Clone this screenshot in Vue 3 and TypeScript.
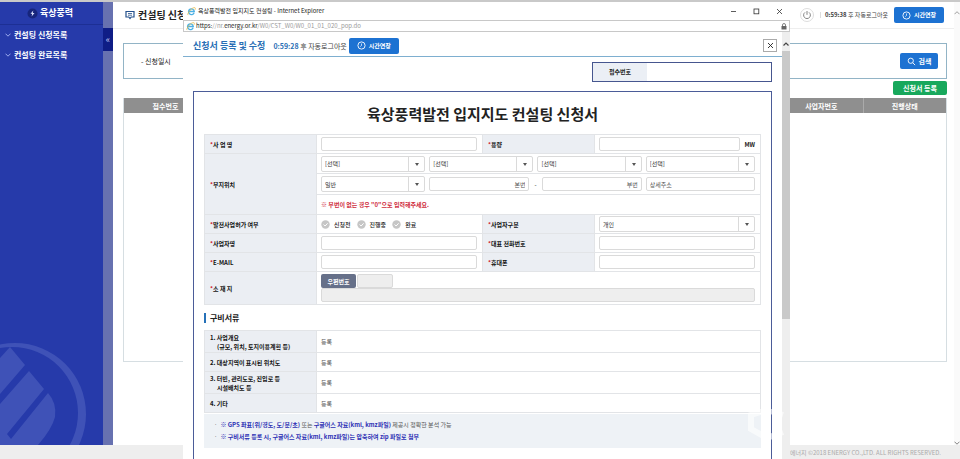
<script setup lang="ts">
import { ref } from 'vue'

interface Doc {
  lines: string[]
}

const menu: string[] = ['컨설팅 신청목록', '컨설팅 완료목록']
const regions: string[] = ['시/도', '시/군/구', '읍/면/동', '리']
const permits: string[] = ['신청전', '진행중', '완료']
const permit = ref<string>('')
const docs: Doc[] = [
  { lines: ['1. 사업개요', '(규모, 위치, 토지이용계획 등)'] },
  { lines: ['2. 대상지역이 표시된 위치도'] },
  { lines: ['3. 터빈, 관리도로, 진입로 등', '시설배치도 등'] },
  { lines: ['4. 기타'] },
]
</script>

<template>
  <div class="page">
    <div class="shell">
      <aside class="sidebar">
        <div class="brand">
          <svg class="brand-icon" viewBox="0 0 12 12" aria-hidden="true">
            <circle cx="6" cy="6" r="5.5" fill="#17257c" />
            <path d="M6.9 2.6 3.8 6.3h1.9L5 9.4l3.2-3.9H6.3z" fill="#dfe6ff" />
          </svg>
          <span>육상풍력</span>
        </div>
        <nav class="menu">
          <a v-for="item in menu" :key="item" href="#">
            <svg viewBox="0 0 6 4" aria-hidden="true"><path d="M.5.7 3 3.2 5.5.7" fill="none" stroke="#b9c6ff" stroke-width=".8" /></svg>
            {{ item }}
          </a>
        </nav>
        <svg class="emblem" viewBox="0 0 88 102" aria-hidden="true">
          <path fill-rule="evenodd" d="M-56 71a71 71 0 1 1 142 0a71 71 0 1 1-142 0zM-54 70a66 66 0 1 1 132 0a66 66 0 1 1-132 0z" fill="#3f52b7" />
          <path d="M10 4 25 22 0 51V15z" fill="#3f52b7" />
          <path d="M29 28 44 46 7 91 11 96 48 50Q57 60 55 74 52 86 38 102H0V61z" fill="#3f52b7" />
        </svg>
      </aside>
      <div class="gutter"><button type="button" aria-label="메뉴 접기">«</button></div>

      <main class="main">
        <header class="top">
          <h1>
            <svg viewBox="0 0 10 10" aria-hidden="true">
              <path d="M1 1.5h8v5.5H6.2L5 8.5 3.8 7H1z" fill="none" stroke="#24508c" stroke-width="1.2" />
              <path d="M3 3.5h4M3 5.2h4" stroke="#24508c" stroke-width=".8" />
            </svg>
            컨설팅 신청목록
          </h1>
          <div class="session">
            <button class="power" type="button" aria-label="로그아웃">
              <svg viewBox="0 0 14 14" aria-hidden="true">
                <circle cx="7" cy="7" r="6.5" fill="#fff" stroke="#ddd" />
                <path d="M5 4.4a3.4 3.4 0 1 0 4 0M7 3v3.8" fill="none" stroke="#777" stroke-width=".9" />
              </svg>
            </button>
            <span class="bar"></span>
            <span class="clock small"><b>0:59:38</b> 후 자동로그아웃</span>
            <button class="blue extend" type="button">
              <svg viewBox="0 0 10 10" aria-hidden="true"><circle cx="5" cy="5" r="4" fill="none" stroke="#fff" /><path d="M5 2.8V5L3.6 6.2" fill="none" stroke="#fff" stroke-width=".8" /></svg>
              시간연장
            </button>
          </div>
        </header>
        <section class="search">
          <span>- 신청일시</span>
          <button class="blue find" type="button">
            <svg viewBox="0 0 10 10" aria-hidden="true"><circle cx="4.2" cy="4.2" r="2.9" fill="none" stroke="#fff" /><path d="m6.4 6.4 2.6 2.6" stroke="#fff" /></svg>
            검색
          </button>
        </section>
        <div class="actions"><button class="green" type="button">신청서 등록</button></div>
        <div class="list">
          <table>
            <colgroup><col class="edge" /><col /><col class="edge" /><col class="edge" /></colgroup>
            <thead>
              <tr><th>접수번호</th><td></td><th>사업자번호</th><th>진행상태</th></tr>
            </thead>
          </table>
        </div>
      </main>
      <div class="page-scroll">
        <svg viewBox="0 0 6 4" aria-hidden="true"><path d="M.5 3.2 3 .7l2.5 2.5" fill="none" stroke="#888" stroke-width=".8" /></svg>
        <svg viewBox="0 0 6 4" aria-hidden="true"><path d="M.5.7 3 3.2 5.5.7" fill="none" stroke="#666" stroke-width=".8" /></svg>
      </div>
    </div>
    <footer class="foot">에너지 ©2018 ENERGY CO.,LTD. ALL RIGHTS RESERVED.</footer>

    <section class="popup">
      <div class="titlebar">
        <svg class="ie" viewBox="0 0 10 10" aria-hidden="true">
          <path d="M7.9 6.4A3.2 3.2 0 1 1 8.1 5H2.5" fill="none" stroke="#4bb0e4" stroke-width="1.5" />
          <path d="M1.2 8.9C-.7 8.1 6-.8 9 .9 9.7 1.4 9.2 2.5 8.6 3.4" fill="none" stroke="#e9b83c" stroke-width=".8" />
        </svg>
        <span class="window-name">육상풍력발전 입지지도 컨설팅 - Internet Explorer</span>
        <div class="window-buttons">
          <button type="button" aria-label="최소화"><svg viewBox="0 0 7 7"><path d="M1 3.5h5" stroke="#333" stroke-width=".8" /></svg></button>
          <button type="button" aria-label="최대화"><svg viewBox="0 0 7 7"><rect x="1" y="1" width="4.8" height="4.8" fill="none" stroke="#333" stroke-width=".8" /></svg></button>
          <button type="button" aria-label="창 닫기"><svg viewBox="0 0 7 7"><path d="m1 1 5 5M6 1 1 6" stroke="#333" stroke-width=".8" /></svg></button>
        </div>
      </div>
      <div class="address">
        <svg class="ie" viewBox="0 0 10 10" aria-hidden="true">
          <path d="M7.9 6.4A3.2 3.2 0 1 1 8.1 5H2.5" fill="none" stroke="#4bb0e4" stroke-width="1.5" />
          <path d="M1.2 8.9C-.7 8.1 6-.8 9 .9 9.7 1.4 9.2 2.5 8.6 3.4" fill="none" stroke="#e9b83c" stroke-width=".8" />
        </svg>
        <span class="url"><b>https:</b>//nr.<b>energy.or.kr</b>/W0/CST_W0/W0_01_01_020_pop.do</span>
        <svg class="lock" viewBox="0 0 6 7" aria-hidden="true"><rect x=".5" y="3" width="5" height="3.5" fill="#666" /><path d="M1.5 3V2a1.5 1.5 0 0 1 3 0v1" fill="none" stroke="#666" stroke-width=".8" /></svg>
      </div>

      <div class="popup-body">
        <div class="popup-content">
          <header class="popup-head">
            <h2>신청서 등록 및 수정</h2>
            <span class="clock"><b class="accent">0:59:28</b> 후 자동로그아웃</span>
            <button class="blue extend near" type="button">
              <svg viewBox="0 0 10 10" aria-hidden="true"><circle cx="5" cy="5" r="4" fill="none" stroke="#fff" /><path d="M5 2.8V5L3.6 6.2" fill="none" stroke="#fff" stroke-width=".8" /></svg>
              시간연장
            </button>
            <button class="close" type="button" aria-label="닫기"><svg viewBox="0 0 7 7"><path d="m1 1 5 5M6 1 1 6" stroke="#222" stroke-width=".9" /></svg></button>
          </header>

          <div class="receipt"><span>접수번호</span></div>

          <form class="sheet" @submit.prevent>
            <h3>육상풍력발전 입지지도 컨설팅 신청서</h3>
            <table class="grid">
              <colgroup><col class="label" /><col /><col class="label" /><col /></colgroup>
              <tbody>
                <tr class="r19">
                  <th><label for="name"><i>*</i>사 업 명</label></th>
                  <td><input id="name" type="text" /></td>
                  <th><label for="power"><i>*</i>용량</label></th>
                  <td><div class="unit"><input id="power" type="text" /><b>MW</b></div></td>
                </tr>
                <tr class="r20">
                  <th rowspan="3"><i>*</i>부지위치</th>
                  <td colspan="3">
                    <div class="four">
                      <span v-for="region in regions" :key="region" class="pick">
                        <select :aria-label="region"><option>[선택]</option></select>
                      </span>
                    </div>
                  </td>
                </tr>
                <tr class="r21">
                  <td colspan="3">
                    <div class="four">
                      <span class="pick"><select aria-label="지번 구분"><option>일반</option></select></span>
                      <div class="lot">
                        <input type="text" class="right" placeholder="본번" aria-label="본번" />
                        <span>-</span>
                        <input type="text" class="right" placeholder="부번" aria-label="부번" />
                      </div>
                      <input type="text" placeholder="상세주소" aria-label="상세주소" />
                    </div>
                  </td>
                </tr>
                <tr class="r20"><td colspan="3" class="warn">※ 부번이 없는 경우 "0"으로 입력해주세요.</td></tr>
                <tr class="r19">
                  <th><i>*</i>발전사업허가 여부</th>
                  <td>
                    <div class="radios">
                      <label v-for="p in permits" :key="p">
                        <input v-model="permit" type="radio" name="permit" :value="p" />
                        <svg viewBox="0 0 9 9" aria-hidden="true"><circle cx="4.5" cy="4.5" r="4.2" fill="#c6c6c6" /><path d="m2.6 4.5 1.5 1.5 2.5-2.7" fill="none" stroke="#fff" /></svg>
                        {{ p }}
                      </label>
                    </div>
                  </td>
                  <th><label for="kind"><i>*</i>사업자구분</label></th>
                  <td><span class="pick"><select id="kind"><option>개인</option></select></span></td>
                </tr>
                <tr class="r19">
                  <th><label for="owner"><i>*</i>사업자명</label></th>
                  <td><input id="owner" type="text" /></td>
                  <th><label for="tel"><i>*</i>대표 전화번호</label></th>
                  <td><input id="tel" type="tel" /></td>
                </tr>
                <tr class="r19">
                  <th><label for="mail"><i>*</i>E-MAIL</label></th>
                  <td><input id="mail" type="email" /></td>
                  <th><label for="mobile"><i>*</i>휴대폰</label></th>
                  <td><input id="mobile" type="tel" /></td>
                </tr>
                <tr class="r33">
                  <th><label for="addr"><i>*</i>소 재 지</label></th>
                  <td colspan="3">
                    <div class="zip">
                      <button type="button">우편번호</button>
                      <input type="text" readonly aria-label="우편번호" />
                    </div>
                    <input id="addr" type="text" readonly />
                  </td>
                </tr>
              </tbody>
            </table>

            <h4>구비서류</h4>
            <table class="grid docs">
              <colgroup><col class="label" /><col /></colgroup>
              <tbody>
                <tr v-for="doc in docs" :key="doc.lines[0]" :class="doc.lines.length > 1 ? 'r22' : 'r19'">
                  <th><div v-for="line in doc.lines" :key="line">{{ line }}</div></th>
                  <td>등록</td>
                </tr>
              </tbody>
            </table>
            <ul class="notice">
              <li><b>※ GPS 좌표(위/경도, 도/분/초)</b> 또는 <b>구글어스 자료(kml, kmz파일)</b> 제공시 정확한 분석 가능</li>
              <li><b>※ 구비서류 등록 시, 구글어스 자료(kml, kmz파일)는 압축하여 zip 파일로 첨부</b></li>
            </ul>
          </form>
        </div>
        <div class="scroll">
          <svg viewBox="0 0 8 6" aria-hidden="true"><path d="M1.5 4.5 4 2l2.5 2.5" fill="none" stroke="#444" stroke-width="1.2" /></svg>
          <div class="thumb"></div>
        </div>
      </div>
      <svg class="mark" viewBox="0 0 38 32" aria-hidden="true">
        <path d="M35 6 19 1 3 6v14l16 9 16-6" fill="none" stroke="#fff" stroke-width="6" opacity=".6" />
      </svg>
    </section>
  </div>
</template>

<style>
body {
  margin: 0;
  background: #fff;
}
</style>

<style scoped>
* {
  box-sizing: border-box;
}
.page {
  position: relative;
  display: flex;
  flex-direction: column;
  height: 100vh;
  overflow: hidden;
  border-top: 2px solid #c9c9c9;
  font-family: "Noto Sans CJK KR", sans-serif;
  font-size: 7px;
  line-height: 10px;
  color: #222;
}
h1,
h2,
h3,
h4,
ul {
  margin: 0;
  padding: 0;
}
button,
input,
select {
  font: inherit;
  margin: 0;
  padding: 0;
}
button {
  display: flex;
  align-items: center;
  justify-content: center;
  border: 0;
  background: none;
}
.shell {
  display: flex;
  flex: 1;
  min-height: 0;
}
.sidebar {
  position: relative;
  width: 103px;
  background: #263aaa;
  color: #fff;
  overflow: hidden;
}
.brand {
  display: flex;
  align-items: center;
  justify-content: center;
  gap: 2px;
  height: 23px;
  padding-right: 3px;
  border-bottom: 1px solid #1d2f94;
  font-size: 9px;
  font-weight: 700;
}
.brand-icon {
  width: 11px;
  height: 11px;
}
.menu a {
  display: flex;
  align-items: center;
  gap: 3px;
  height: 20px;
  padding-left: 5px;
  color: #fff;
  font-size: 8px;
  font-weight: 700;
  text-decoration: none;
  white-space: nowrap;
}
.menu svg {
  width: 6px;
  height: 4px;
}
.emblem {
  position: absolute;
  left: 0;
  bottom: 0;
  width: 88px;
  height: 102px;
}
.gutter {
  width: 10px;
  padding-top: 26px;
  background: #6771b0;
}
.gutter button {
  width: 10px;
  height: 23px;
  background: #0f1d86;
  color: #c3cbf5;
  font-size: 9px;
}
.main {
  flex: 1;
  min-width: 0;
}
.top {
  display: flex;
  align-items: center;
  justify-content: space-between;
  height: 27px;
  padding: 0 10px 0 12px;
  border-bottom: 1px solid #eee;
}
h1 {
  display: flex;
  align-items: center;
  gap: 3px;
  font-size: 10px;
}
h1 svg {
  width: 10px;
  height: 10px;
}
.session {
  display: flex;
  align-items: center;
}
.power svg {
  width: 14px;
  height: 14px;
}
.bar {
  width: 1px;
  height: 6px;
  margin: 0 4px 0 6px;
  background: #ddd;
}
.clock {
  white-space: nowrap;
  color: #444;
}
.small {
  font-size: 6px;
}
.blue,
.green {
  gap: 3px;
  border-radius: 2px;
  background: #1d72d2;
  color: #fff;
  font-weight: 700;
}
.blue svg {
  width: 9px;
  height: 9px;
}
.extend {
  width: 50px;
  height: 16px;
  margin-left: 6px;
  font-size: 6px;
}
.near {
  margin-left: 2px;
}
.search {
  display: flex;
  align-items: center;
  justify-content: space-between;
  height: 36px;
  margin: 14px 7px 0 10px;
  padding: 0 8px 0 17px;
  border: 1px solid #92b4c6;
}
.find {
  width: 38px;
  height: 16px;
}
.actions {
  display: flex;
  justify-content: flex-end;
  padding: 2px 7px 3px 0;
}
.green {
  width: 54px;
  height: 14px;
  background: #18a85c;
}
.list {
  height: 264px;
  margin: 0 7px 0 10px;
  border: 1px solid #d6dee2;
  border-top: 0;
}
.list table {
  width: 100%;
  table-layout: fixed;
  border-collapse: collapse;
}
.edge {
  width: 83px;
}
.list th,
.list td {
  height: 15px;
  padding: 0;
  background: #8f8f8f;
  color: #fff;
}
.list th + th {
  border-left: 1px solid #aaa;
}
.page-scroll {
  display: flex;
  flex-direction: column;
  justify-content: space-between;
  width: 6px;
  padding-top: 9px;
  background: #fafafa;
}
.page-scroll svg {
  width: 6px;
  height: 4px;
}
.foot {
  height: 14px;
  padding: 0 19px;
  background: #eee;
  color: #aaa;
  font-size: 6px;
  line-height: 16px;
  text-align: right;
}
.popup {
  position: absolute;
  top: 0;
  right: 170px;
  bottom: 0;
  left: 183px;
  display: flex;
  flex-direction: column;
  overflow: hidden;
  background: #fff;
}
.titlebar {
  display: flex;
  align-items: center;
  height: 18px;
  padding: 0 7px 0 4px;
  font-size: 6px;
}
.ie {
  width: 9px;
  height: 9px;
}
.window-name {
  flex: 1;
  padding-left: 2px;
}
.window-buttons {
  display: flex;
  gap: 16px;
}
.window-buttons svg,
.close svg {
  width: 7px;
  height: 7px;
}
.address {
  display: flex;
  align-items: center;
  height: 12px;
  padding: 0 2px;
  border: 1px solid #c8c8c8;
  font-size: 6px;
}
.url {
  flex: 1;
  padding-left: 1px;
  color: #999;
}
.url b {
  font-weight: 400;
  color: #222;
}
.lock {
  width: 6px;
  height: 7px;
}
.popup-body {
  display: flex;
  flex: 1;
  min-height: 0;
}
.popup-content {
  display: flex;
  flex: 1;
  flex-direction: column;
  min-width: 0;
}
.popup-head {
  display: flex;
  align-items: center;
  height: 25px;
  padding: 3px 5px 0 10px;
  border-bottom: 1px solid #7eafd0;
}
h2 {
  margin-right: 8px;
  color: #2a6fb5;
  font-size: 9px;
}
.accent {
  color: #2a6fb5;
}
.close {
  width: 14px;
  height: 13px;
  margin-left: auto;
  border: 1px solid #aaa;
}
.receipt {
  display: flex;
  width: 180px;
  height: 20px;
  margin: 5px 10px 9px auto;
  border: 1px solid #46568f;
}
.receipt span {
  width: 54px;
  background: #ebeff5;
  font-size: 6px;
  font-weight: 700;
  line-height: 18px;
  text-align: center;
}
.sheet {
  flex: 1;
  min-height: 0;
  margin: 0 10px;
  padding: 0 10px;
  border: 1px solid #4b5c98;
  border-bottom: 0;
}
h3 {
  height: 42px;
  font-size: 15px;
  line-height: 43px;
  text-align: center;
}
.grid {
  width: 100%;
  table-layout: fixed;
  border-collapse: collapse;
  font-size: 6px;
  line-height: 9px;
}
.label {
  width: 112px;
}
.grid th,
.grid td {
  padding: 0 5px 0 4px;
  border: 1px solid #e2e4e7;
  text-align: left;
  vertical-align: middle;
}
.grid th {
  padding-left: 5px;
  background: #ebeef3;
  color: #111;
}
.grid i {
  color: #d0202e;
  font-style: normal;
}
.r19 {
  height: 19px;
}
.r20 {
  height: 20px;
}
.r21 {
  height: 21px;
}
.r22 {
  height: 22px;
}
.r33 {
  height: 33px;
}
.grid input[type="text"],
.grid input[type="tel"],
.grid input[type="email"] {
  display: block;
  width: 100%;
  min-width: 0;
  height: 14px;
  padding: 0 3px;
  border: 1px solid #dadada;
  border-radius: 2px;
  background: #fff;
}
.grid input[readonly] {
  background: #eee;
}
.grid input::placeholder {
  color: #555;
  opacity: 1;
}
.grid .right {
  text-align: right;
}
.unit {
  display: flex;
  align-items: center;
  gap: 4px;
}
.four {
  display: grid;
  grid-template-columns: 104fr 104fr 104fr 109fr;
  align-items: center;
  gap: 4px;
}
.lot {
  display: flex;
  grid-column: span 2;
  align-items: center;
  gap: 5px;
}
.pick {
  position: relative;
  display: block;
}
.pick select {
  display: block;
  width: 100%;
  height: 16px;
  padding: 0 20px 0 3px;
  appearance: none;
  border: 1px solid #dadada;
  border-radius: 2px;
  background: #fff;
  color: #333;
}
.pick::before {
  content: "";
  position: absolute;
  top: 1px;
  right: 16px;
  bottom: 1px;
  width: 1px;
  background: #dadada;
}
.pick::after {
  content: "";
  position: absolute;
  top: 7px;
  right: 6px;
  border: 2px solid transparent;
  border-top: 3px solid #555;
  border-bottom: 0;
}
.grid .warn {
  color: #cf2c3c;
  font-weight: 700;
}
.radios {
  display: flex;
  gap: 6px;
}
.radios label {
  position: relative;
  display: flex;
  align-items: center;
  gap: 4px;
  font-weight: 500;
}
.radios input {
  position: absolute;
  width: 9px;
  height: 9px;
  opacity: 0;
}
.radios svg {
  width: 9px;
  height: 9px;
}
.zip {
  display: flex;
  gap: 1px;
}
.zip button {
  width: 35px;
  height: 14px;
  border-radius: 2px;
  background: #667089;
  color: #fff;
  font-weight: 700;
}
.grid .zip input {
  width: 36px;
}
h4 {
  margin: 8px 0 7px;
  padding-left: 4px;
  border-left: 2px solid #2671b8;
  font-size: 8px;
  line-height: 10px;
}
.docs td {
  color: #555;
}
.docs th div + div {
  padding-left: 7px;
}
.notice {
  margin-top: 1px;
  padding: 5px 10px;
  background: #eef2f6;
  color: #555;
  font-size: 6px;
  line-height: 12px;
  list-style: none;
}
.notice li::before {
  content: "·";
  margin-right: 3px;
}
.notice b {
  color: #2b2fb4;
}
.scroll {
  display: flex;
  flex-direction: column;
  width: 8px;
  padding-top: 9px;
  background: #eee;
}
.scroll svg {
  width: 8px;
  height: 6px;
}
.thumb {
  height: 64%;
  margin-top: 4px;
  background: #c9c9c9;
}
.mark {
  position: absolute;
  right: 4px;
  bottom: 18px;
  width: 38px;
  height: 32px;
}
</style>
